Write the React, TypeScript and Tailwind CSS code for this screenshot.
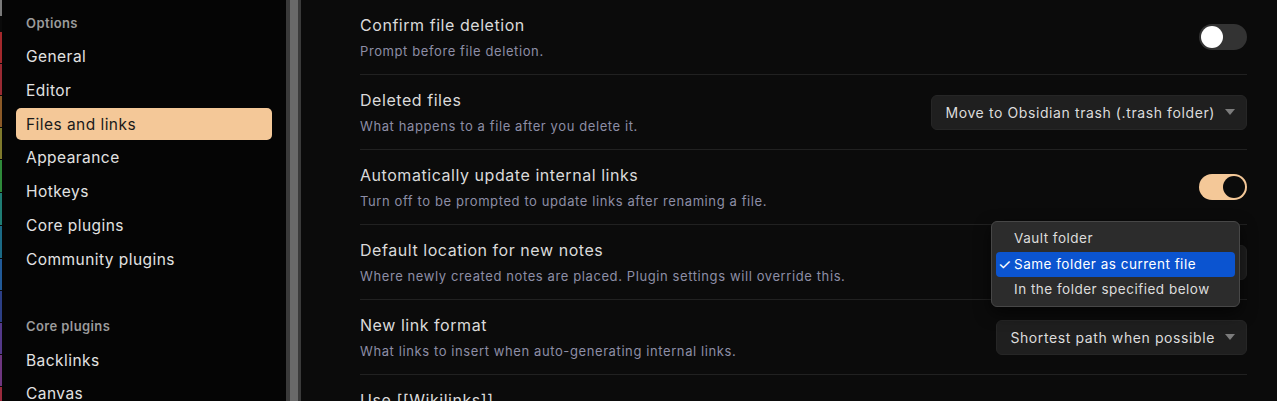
import React from 'react';

const strip = [
  { h: 17, c: '#7a7a7a' },
  { h: 15, c: '#0a0a0a' },
  { h: 32, c: '#a3282c' },
  { h: 32, c: '#9a2a33' },
  { h: 32, c: '#8c5a27' },
  { h: 32, c: '#7f7a2c' },
  { h: 33, c: '#2e8a3a' },
  { h: 33, c: '#1f7d74' },
  { h: 33, c: '#1b6a86' },
  { h: 32, c: '#215a98' },
  { h: 32, c: '#2c3f86' },
  { h: 32, c: '#54398a' },
  { h: 32, c: '#6e3680' },
  { h: 20, c: '#9a2a3c' },
];

const options = ['General', 'Editor', 'Files and links', 'Appearance', 'Hotkeys', 'Core plugins', 'Community plugins'];
const corePlugins = ['Backlinks', 'Canvas'];

function Caret() {
  return (
    <svg width="10" height="6" viewBox="0 0 10 6" className="ml-[10px] shrink-0">
      <path d="M0 0 L10 0 L5 6 Z" fill="#7c7c7c" />
    </svg>
  );
}

function Select({ value, className = '' }: { value: string; className?: string }) {
  return (
    <div
      className={`flex h-[35px] items-center rounded-[6px] border border-[#262626] bg-[#1f1f1f] pl-[13px] pr-[11px] text-[14px] tracking-[0.6px] text-[#dcdcdc] ${className}`}
    >
      <span className="whitespace-nowrap">{value}</span>
      <Caret />
    </div>
  );
}

function Toggle({ on }: { on: boolean }) {
  return (
    <div
      className={`flex h-[26px] w-[48px] items-center rounded-full p-[2px] ${
        on ? 'justify-end bg-[#f4c898]' : 'justify-start bg-[#333333]'
      }`}
    >
      <div className={`h-[22px] w-[22px] rounded-full ${on ? 'bg-[#0b0b0b]' : 'bg-white'}`} />
    </div>
  );
}

function Row({
  title,
  desc,
  children,
  last,
}: {
  title: string;
  desc?: string;
  children?: React.ReactNode;
  last?: boolean;
}) {
  return (
    <div className={`relative flex h-[75px] shrink-0 items-center justify-between ${last ? '' : 'border-b border-[#212121]'}`}>
      <div>
        <div className="text-[16px] leading-[22px] tracking-[0.55px] text-[#dadada]">{title}</div>
        {desc && (
          <div className="mt-[5px] text-[13px] leading-[20px] tracking-[0.6px] text-[#8d8ea6]">{desc}</div>
        )}
      </div>
      {children}
    </div>
  );
}

export default function App() {
  return (
    <div
      className="flex h-[401px] w-full overflow-hidden bg-[#0b0b0b]"
      style={{ fontFamily: 'Inter, "Noto Sans", sans-serif' }}
    >
      {/* colour strip */}
      <div className="flex w-[2px] shrink-0 flex-col bg-[#0a0a0a]">
        {strip.map((s, i) => (
          <div key={i} className="mb-[1px] shrink-0" style={{ height: s.h - 1, background: s.c }} />
        ))}
      </div>

      {/* sidebar */}
      <div className="w-[284px] shrink-0 bg-[#050505] pl-[14px] pr-[14px] pt-[13px]">
        <div className="h-[20px] pl-[10px] text-[13px] font-semibold leading-[20px] tracking-[0.4px] text-[#9b9b9b]">
          Options
        </div>
        <div className="mt-[8px] flex flex-col gap-[1.7px]">
          {options.map((o) => (
            <div
              key={o}
              className={`flex h-[32px] items-center rounded-[5px] pl-[10px] text-[15.5px] tracking-[0.45px] ${
                o === 'Files and links' ? 'bg-[#f4c898] text-[#1a1a1a]' : 'text-[#e2e2e2]'
              }`}
            >
              {o}
            </div>
          ))}
        </div>
        <div className="mt-[41px] h-[20px] pl-[10px] text-[13px] font-semibold leading-[20px] tracking-[0.4px] text-[#9b9b9b]">
          Core plugins
        </div>
        <div className="mt-[8px] flex flex-col gap-[1.7px]">
          {corePlugins.map((o) => (
            <div key={o} className="flex h-[32px] shrink-0 items-center pl-[10px] text-[15.5px] tracking-[0.45px] text-[#e2e2e2]">
              {o}
            </div>
          ))}
        </div>
      </div>

      {/* resize divider */}
      <div className="flex w-[15px] shrink-0">
        <div className="w-[4px] bg-[#3a3a3a]" />
        <div className="w-[8px] bg-[#696969]" />
        <div className="w-[3px] bg-[#3a3a3a]" />
      </div>

      {/* content */}
      <div className="flex min-w-0 flex-1 flex-col pl-[59px] pr-[30px]">
        <Row title="Confirm file deletion" desc="Prompt before file deletion.">
          <Toggle on={false} />
        </Row>
        <Row title="Deleted files" desc="What happens to a file after you delete it.">
          <Select value="Move to Obsidian trash (.trash folder)" />
        </Row>
        <Row
          title="Automatically update internal links"
          desc="Turn off to be prompted to update links after renaming a file."
        >
          <Toggle on />
        </Row>
        <Row
          title="Default location for new notes"
          desc="Where newly created notes are placed. Plugin settings will override this."
        >
          <Select value="Same folder as current file" className="border-[#3c3c3c]" />
          <div className="absolute right-[7px] top-[-4px] z-10 w-[249px] rounded-[6px] border border-[#474747] bg-[#2c2c2c] px-[4px] py-[4px] text-[13.5px] tracking-[0.5px] text-[#dcdcdc] shadow-[0_6px_16px_rgba(0,0,0,0.6)]">
            <div className="flex h-[25px] items-center pl-[18px]">Vault folder</div>
            <div className="mt-[0.5px] flex h-[25px] items-center rounded-[4px] bg-[#0b54d0] pl-[2px] text-white">
              <span className="w-[16px] text-[15px] leading-none">✓</span>Same folder as current file
            </div>
            <div className="mt-[0.5px] flex h-[25px] items-center pl-[18px]">In the folder specified below</div>
          </div>
        </Row>
        <Row title="New link format" desc="What links to insert when auto-generating internal links.">
          <Select value="Shortest path when possible" />
        </Row>
        <Row title="Use [[Wikilinks]]" desc="Auto-generate Wikilinks for [[links]] and ![[images]] instead of Markdown links and images." last />
      </div>
    </div>
  );
}
